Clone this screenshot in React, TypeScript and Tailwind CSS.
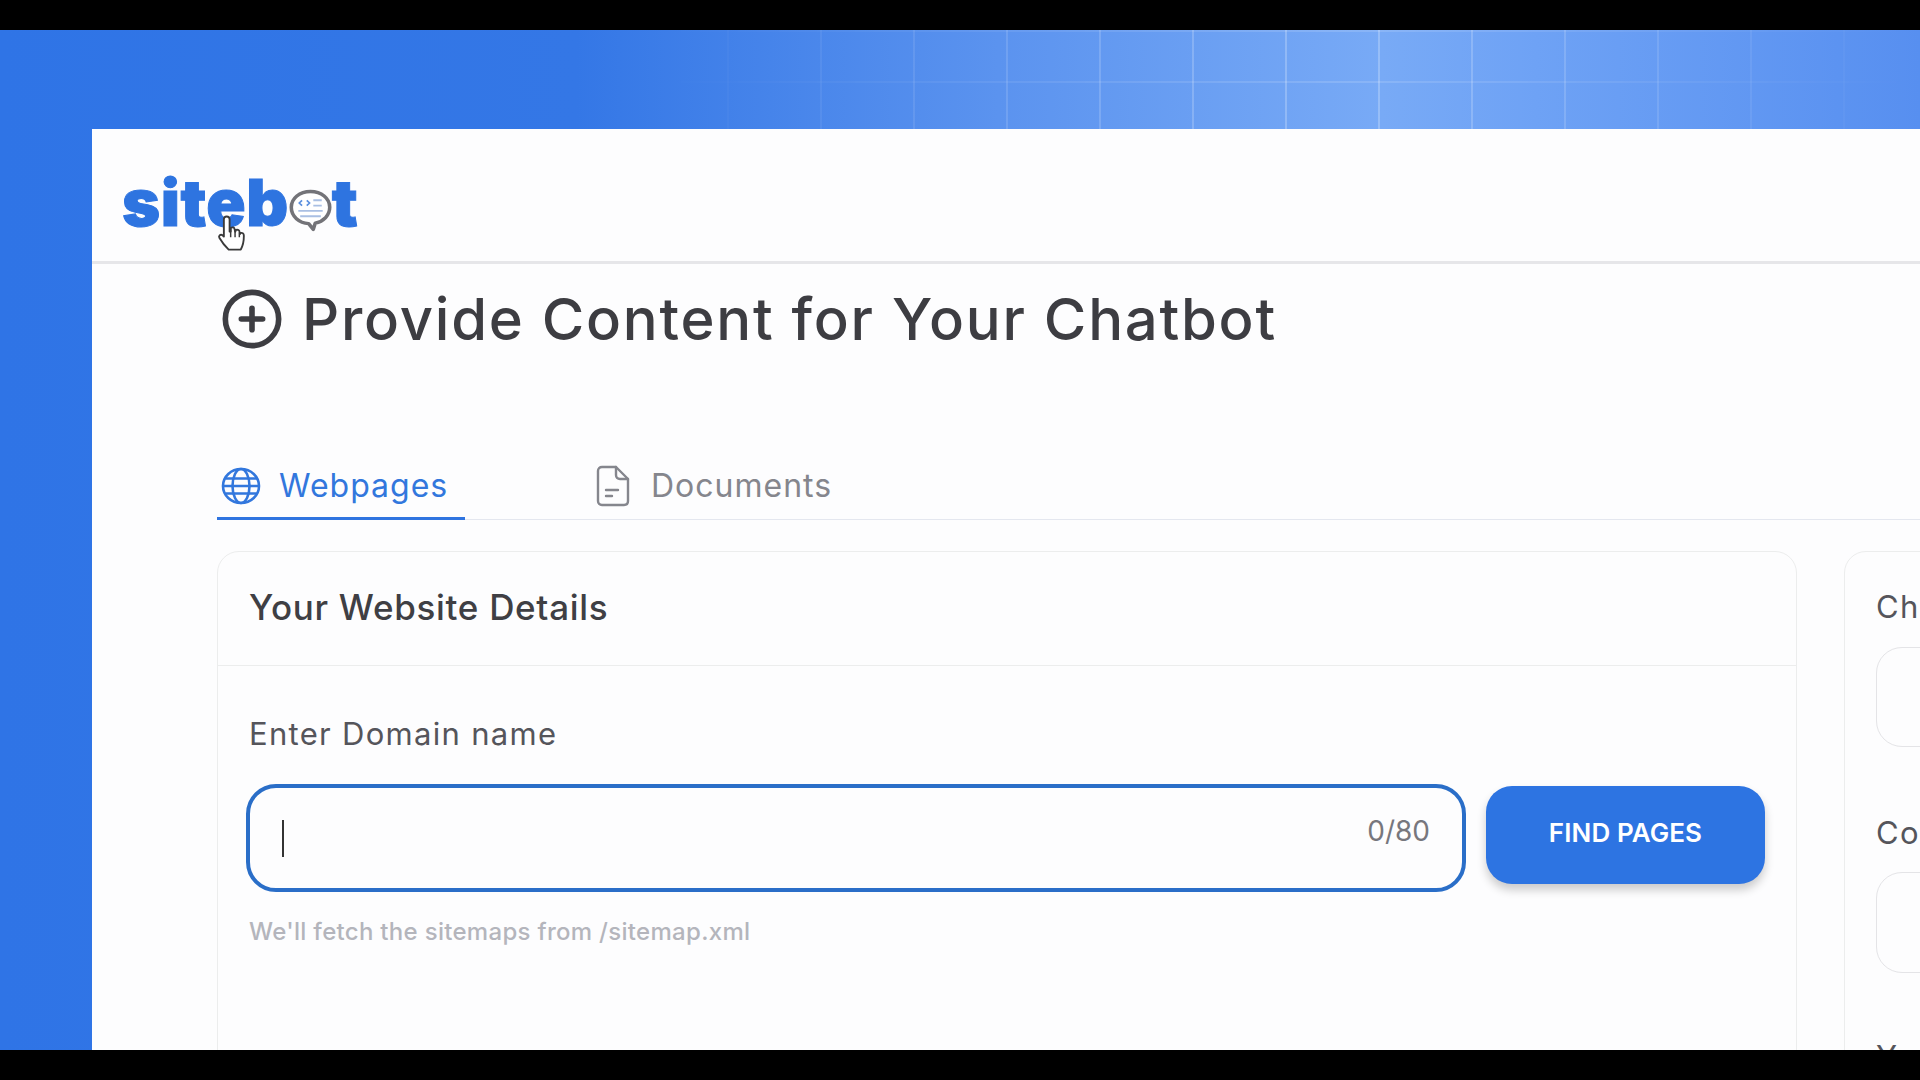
import { CirclePlus } from 'lucide-react';

const font = "font-['Inter',sans-serif]";

const BotBubble = () => (
  <svg viewBox="0 0 48 50" className="w-[45px] h-[44px] -mx-[1px] mt-[20px]" fill="none" preserveAspectRatio="none">
    <path
      d="M24 4C12.500 4 3.500 11.500 3.500 22S12 40 22 40.500L27 47l2-7C38 38 44.500 31 44.500 22 44.500 11.500 35.500 4 24 4Z"
      fill="#fff"
      stroke="#737378"
      strokeWidth="3.800"
      strokeLinejoin="round"
    />
    <path d="M15 14l-3 3 3 3M20 14l3 3-3 3" stroke="#5b8fdf" strokeWidth="1.800" />
    <path d="M27 14h9M27 20h9M11 26h26M13 32h22" stroke="#a9bfe3" strokeWidth="2.200" />
  </svg>
);

const HandCursor = () => (
  <svg viewBox="0 0 24 32" className="absolute left-[124px] top-[84px] w-[32px] h-[43px]">
    <path
      d="M8 2.500c1.400 0 2.200 1 2.200 2.300v9l.8.100V11c1.600-.8 2.800-.3 3 1.200l.4 1.800.6-1.400c1.500-.5 2.500.2 2.700 1.500l.3 1.500.5-.8c1.500-.3 2.400.6 2.400 2.200 0 4-.7 7.500-2.300 10.300H9.500C7 25 4.500 22 2.500 18.500c-.8-1.500.9-3 2.400-1.900l1 1V4.800C5.900 3.500 6.700 2.500 8 2.500Z"
      fill="#fff"
      stroke="#3a3a3a"
      strokeWidth="1.400"
      strokeLinejoin="round"
    />
    <path d="M11 11v7M14.300 13v5M17.500 14.500V18" stroke="#3a3a3a" strokeWidth="1.100" />
  </svg>
);

const GlobeIcon = () => (
  <svg viewBox="0 0 40 38" className="w-[40px] h-[38px]" fill="none" stroke="currentColor" strokeWidth="2.600">
    <ellipse cx="20" cy="19" rx="18" ry="17" />
    <ellipse cx="20" cy="19" rx="8.500" ry="17" />
    <path d="M4.500 11.500h31M2 19h36M4.500 26.500h31" />
  </svg>
);

const DocIcon = () => (
  <svg viewBox="0 0 34 42" className="w-[34px] h-[42px]" fill="none" stroke="currentColor" strokeWidth="2.400" strokeLinejoin="round" strokeLinecap="round">
    <path d="M6 2h14l12 12v22c0 2.500-1.700 4-4 4H6c-2.300 0-4-1.500-4-4V6c0-2.500 1.700-4 4-4Z" />
    <path d="M20 2v8c0 2.500 1.500 4 4 4h8" />
    <path d="M10 25h12M10 31h6" />
  </svg>
);

const App = () => {
  return (
    <div className={`h-screen bg-black py-[30px] overflow-hidden ${font}`}>
      <main className="relative h-full overflow-hidden bg-[linear-gradient(90deg,#2f74e6_0%,#3477e6_30%,#5b93ef_52%,#78aaf6_72%,#6ea2f5_80%,#578ff0_100%)] pl-[92px] pt-[99px]">
        {/* grid lines of the backdrop */}
        <div className="absolute inset-0 bg-[linear-gradient(#ffffff24_2px,transparent_2px),linear-gradient(90deg,#ffffff40_2px,transparent_2px)] bg-[size:93px_51px] bg-[position:76px_0] [mask-image:linear-gradient(90deg,transparent_34%,black_70%,transparent_100%)]"></div>

        <div className="relative w-[1900px] h-full bg-[#fdfdfe]">
          {/* Logo bar */}
          <header className="relative h-[135px] border-b-[3px] border-[#e6e6e9] pl-[30px] pt-[39px]">
            <div className="flex items-start h-[70px] font-black text-[#2e74e0] text-[65px] leading-[70px] tracking-[0.500px] [-webkit-text-stroke:1px_#2e74e0]">
              <span>siteb</span>
              <BotBubble />
              <span>t</span>
            </div>
            <HandCursor />
          </header>

          <div className="pl-[125px]">
            {/* Title */}
            <div className="flex items-center gap-[18px] h-[87px] mt-[11px] pl-[3px]">
              <CirclePlus className="w-[64px] h-[64px] text-[#3d3d42]" strokeWidth={2.100} />
              <h1 className="text-[58px] leading-[64px] font-medium text-[#3d3d42] tracking-[1.750px]">
                Provide Content for Your Chatbot
              </h1>
            </div>

            {/* Tabs */}
            <div className="flex h-[86px] mt-[72px] items-end border-b-[1px] border-[#e4e7ef]">
              <div className="flex items-center gap-[18px] w-[248px] h-[64px] pl-[4px] pb-[1px] border-b-[3px] border-[#2f74e0] -mb-[1px] text-[#3277dd]">
                <GlobeIcon />
                <span className="text-[32px] leading-[40px] tracking-[1px]">Webpages</span>
              </div>
              <div className="flex items-center gap-[21px] ml-[131px] h-[64px] pb-[2px] text-[#85868d]">
                <DocIcon />
                <span className="text-[32px] leading-[40px] tracking-[1px]">Documents</span>
              </div>
            </div>

            {/* Cards */}
            <div className="flex gap-[47px] mt-[31px]">
              <section className="w-[1580px] h-[620px] shrink-0 border border-[#eceded] rounded-[22px]">
                <div className="h-[114px] flex items-center pl-[31px] pb-[4px] border-b border-[#eceded]">
                  <h2 className="text-[35px] font-medium leading-[44px] text-[#3f3f44] tracking-[0.700px]">Your Website Details</h2>
                </div>
                <div className="px-[28px] pt-[48px]">
                  <label className="block pl-[3px] text-[31px] leading-[40px] text-[#55555b] tracking-[1.300px]">Enter Domain name</label>
                  <div className="flex items-start gap-[20px] mt-[30px]">
                    <div className="flex items-center justify-between w-[1220px] h-[108px] pl-[32px] pr-[32px] border-[4px] border-[#2a6ec8] rounded-[30px]">
                      <span className="w-[2px] h-[37px] bg-[#333]"></span>
                      <span className="-mt-[14px] text-[28px] text-[#77777d]">0/80</span>
                    </div>
                    <button className="w-[279px] h-[98px] mt-[2px] pb-[6px] rounded-[26px] bg-[#2d74e2] text-white text-[26px] font-semibold tracking-[0.100px] shadow-[0_6px_10px_rgba(0,0,0,0.2)]">
                      FIND PAGES
                    </button>
                  </div>
                  <p className="mt-[24px] pl-[3px] text-[24px] leading-[32px] font-medium text-[#b4b5bc] tracking-[0.300px]">
                    We'll fetch the sitemaps from /sitemap.xml
                  </p>
                </div>
              </section>

              <section className="w-[500px] h-[620px] shrink-0 border border-[#eceded] rounded-[22px] pl-[31px] pt-[35px]">
                <p className="text-[31px] leading-[40px] text-[#55555b] tracking-[1.300px]">Chatbot Name</p>
                <div className="h-[100px] mt-[20px] border border-[#e4e4e7] rounded-[26px]"></div>
                <p className="mt-[66px] text-[31px] leading-[40px] text-[#55555b] tracking-[1.300px]">Company Name</p>
                <div className="h-[101px] mt-[19px] border border-[#e4e4e7] rounded-[26px]"></div>
                <p className="mt-[64px] text-[31px] leading-[40px] text-[#55555b] tracking-[1.300px]">Your Name</p>
              </section>
            </div>
          </div>
        </div>
      </main>
    </div>
  );
};

export default App;
